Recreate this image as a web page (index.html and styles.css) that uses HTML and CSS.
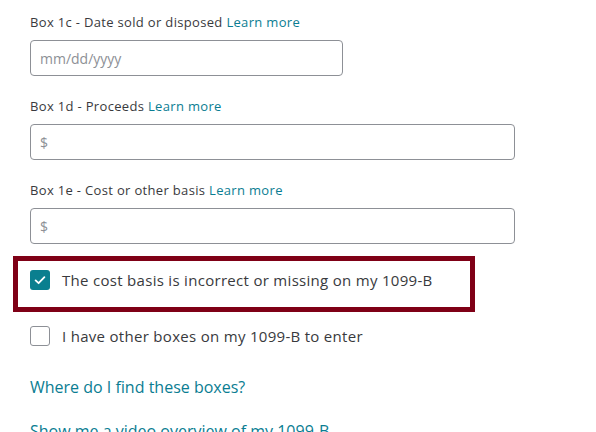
FILE: index.html
```html
<!DOCTYPE html>
<html>
<head>
<meta charset="utf-8">
<link rel="stylesheet" href="styles.css">
</head>
<body>
<div class="page">
  <div class="field">
    <div class="label">Box 1c - Date sold or disposed <a class="link">Learn more</a></div>
    <div class="input short"><span class="ph">mm/dd/yyyy</span></div>
  </div>
  <div class="field">
    <div class="label">Box 1d - Proceeds <a class="link">Learn more</a></div>
    <div class="input"><span class="ph">$</span></div>
  </div>
  <div class="field">
    <div class="label">Box 1e - Cost or other basis <a class="link">Learn more</a></div>
    <div class="input"><span class="ph">$</span></div>
  </div>
  <div class="highlight">
    <div class="check-row">
      <span class="box checked">
        <svg width="20" height="20" viewBox="0 0 20 20"><path d="M5.6 10.4 L8.6 13.2 L14.4 7.2" fill="none" stroke="#fff" stroke-width="1.8" stroke-linecap="round" stroke-linejoin="round"/></svg>
      </span>
      <span class="check-text">The cost basis is incorrect or missing on my 1099-B</span>
    </div>
  </div>
  <div class="check-row plain">
    <span class="box"></span>
    <span class="check-text">I have other boxes on my 1099-B to enter</span>
  </div>
  <a class="big-link first">Where do I find these boxes?</a>
  <a class="big-link second">Show me a video overview of my 1099-B</a>
</div>
</body>
</html>
```
FILE: styles.css
```css
html, body {
  margin: 0;
  padding: 0;
  background: #fff;
}
.page {
  padding: 13px 0 0 30px;
  font-family: "Open Sans", "Noto Sans", sans-serif;
  color: #393a3d;
}
.field {
  margin-bottom: 21px;
}
.label {
  font-size: 13px;
  line-height: 18px;
  margin-bottom: 9px;
  white-space: nowrap;
  letter-spacing: 0.33px;
}
.link {
  color: #0a7d92;
}
.input {
  width: 485px;
  height: 36px;
  box-sizing: border-box;
  border: 1px solid #8d9096;
  border-radius: 4px;
  display: flex;
  align-items: center;
  padding-left: 9px;
}
.input.short {
  width: 313px;
}
.ph {
  font-size: 14px;
  color: #8d9096;
}
.highlight {
  margin: -9px 0 0 -17px;
  width: 462px;
  height: 56px;
  box-sizing: border-box;
  border: 5px solid #7f0016;
  padding: 9px 0 0 12px;
}
.check-row {
  display: flex;
  align-items: center;
  gap: 12px;
}
.check-row.plain {
  margin-top: 14px;
}
.box {
  width: 20px;
  height: 20px;
  box-sizing: border-box;
  border: 1px solid #8d9096;
  border-radius: 3px;
  flex: none;
  display: block;
}
.box.checked {
  background: #0a7f8f;
  border: none;
}
.box svg {
  display: block;
}
.check-text {
  font-size: 15px;
  line-height: 20px;
  white-space: nowrap;
  letter-spacing: 0.3px;
}
.big-link {
  display: block;
  font-size: 16px;
  line-height: 22px;
  color: #0a7d92;
  white-space: nowrap;
}
.big-link.first {
  margin-top: 30px;
}
.big-link.second {
  margin-top: 22px;
}
```
